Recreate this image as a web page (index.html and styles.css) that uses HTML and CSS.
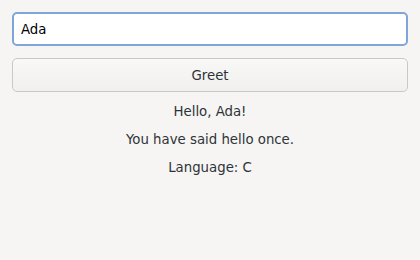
FILE: index.html
```html
<!DOCTYPE html>
<html lang="en">
<head>
  <meta charset="UTF-8" />
  <title>Greeter</title>
  <link rel="stylesheet" href="styles.css">
</head>
<body>
  <div class="window">
    <input class="entry" type="text" value="Ada">
    <button class="btn">Greet</button>
    <div class="label">Hello, Ada!</div>
    <div class="label">You have said hello once.</div>
    <div class="label">Language: C</div>
  </div>
</body>
</html>
```

FILE: styles.css
```css
body {
  margin: 0;
  background: #f6f5f4;
  font-family: "DejaVu Sans", sans-serif;
  font-size: 13.3px;
  color: #2e3436;
}
.window {
  display: flex;
  flex-direction: column;
  gap: 12px;
  padding: 12px;
}
.entry {
  height: 34px;
  box-sizing: border-box;
  border: 2px solid #7ea6db;
  border-radius: 5px;
  background: white;
  padding: 0 7px;
  font-family: inherit;
  font-size: 13.3px;
  color: #000;
  outline: none;
}
.btn {
  height: 34px;
  box-sizing: border-box;
  border: 1px solid #cdc7c2;
  border-radius: 5px;
  background: linear-gradient(#f8f8f7, #f1f0ef);
  font-family: inherit;
  font-size: 13.3px;
  color: #2e3436;
}
.label {
  text-align: center;
  line-height: 17px;
  margin-top: -1px;
}
```
